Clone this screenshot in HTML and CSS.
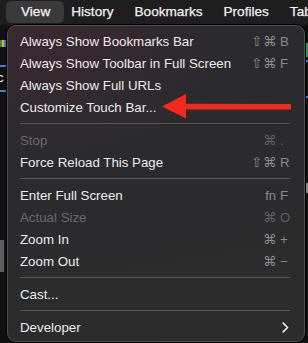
FILE: index.html
```html
<!DOCTYPE html>
<html>
<head>
<meta charset="utf-8">
<link rel="stylesheet" href="styles.css">
</head>
<body>
<div class="screen">
  <header class="menubar">
    <span class="mb-item active">View</span>
    <span class="mb-item">History</span>
    <span class="mb-item">Bookmarks</span>
    <span class="mb-item">Profiles</span>
    <span class="mb-item">Tab</span>
  </header>
  <div class="desk">
    <div class="edge edge-left">
      <div class="favicon"><i class="c1"></i><i class="c2"></i><i class="c3"></i></div>
      <div class="bl bl1"></div>
      <div class="ch">c</div>
      <div class="bl bl2"></div>
      <div class="gray-block"></div>
    </div>
    <div class="fill"></div>
    <div class="edge edge-right">
      <div class="green"></div>
      <div class="bl bl3"></div>
      <div class="bl bl4"></div>
      <div class="lg"></div>
    </div>

    <div class="menu">
      <div class="item"><span class="label">Always Show Bookmarks Bar</span><span class="sc"><span class="mods">⇧⌘</span><span class="key">B</span></span></div>
      <div class="item"><span class="label">Always Show Toolbar in Full Screen</span><span class="sc"><span class="mods">⇧⌘</span><span class="key">F</span></span></div>
      <div class="item"><span class="label">Always Show Full URLs</span></div>
      <div class="item"><span class="label">Customize Touch Bar...</span></div>
      <div class="sep"></div>
      <div class="item disabled"><span class="label">Stop</span><span class="sc"><span class="mods">⌘</span><span class="key">.</span></span></div>
      <div class="item"><span class="label">Force Reload This Page</span><span class="sc"><span class="mods">⇧⌘</span><span class="key">R</span></span></div>
      <div class="sep"></div>
      <div class="item"><span class="label">Enter Full Screen</span><span class="sc"><span class="mods fn">fn</span><span class="key">F</span></span></div>
      <div class="item disabled"><span class="label">Actual Size</span><span class="sc"><span class="mods">⌘</span><span class="key">O</span></span></div>
      <div class="item"><span class="label">Zoom In</span><span class="sc"><span class="mods">⌘</span><span class="key">+</span></span></div>
      <div class="item"><span class="label">Zoom Out</span><span class="sc"><span class="mods">⌘</span><span class="key">−</span></span></div>
      <div class="sep"></div>
      <div class="item"><span class="label">Cast...</span></div>
      <div class="sep"></div>
      <div class="item"><span class="label">Developer</span><svg class="chev" width="7" height="11" viewBox="0 0 7 11"><path d="M1.2 1.2 L5.6 5.5 L1.2 9.8" fill="none" stroke="#e6e6e6" stroke-width="1.7" stroke-linecap="round" stroke-linejoin="round"/></svg></div>

      <svg class="arrow" width="132" height="28" viewBox="0 0 132 28">
        <polygon points="0,13.5 24,1 24,10.8 129,11 129,16.5 24,16.5 24,25.5" fill="#f2291b"/>
      </svg>
    </div>
  </div>
</div>
</body>
</html>
```

FILE: styles.css
```css
* { box-sizing: border-box; }
html, body { margin: 0; padding: 0; }
body {
  width: 308px;
  height: 343px;
  overflow: hidden;
  background: #0e0e0e;
  font-family: "Liberation Sans", Arial, sans-serif;
}
.screen {
  width: 308px;
  height: 343px;
  display: flex;
  flex-direction: column;
  overflow: hidden;
}
.menubar {
  height: 25px;
  flex: none;
  background: #1e1e1e;
  display: flex;
  align-items: flex-start;
  padding: 1px 0 0 21px;
  gap: 21px;
  overflow: hidden;
}
.mb-item {
  color: #f2f2f2;
  font-size: 13.6px;
  height: 22px;
  line-height: 22px;
  border-radius: 5px;
  -webkit-text-stroke: 0.25px #f2f2f2;
  white-space: nowrap;
  flex: none;
}
.mb-item.active {
  background: #3a3a3a;
  padding: 0 14px 0 15px;
  margin: 0 -14px 0 -15px;
}
.desk {
  flex: 1;
  position: relative;
  display: flex;
}
.edge {
  display: flex;
  flex-direction: column;
  background: #111;
  overflow: hidden;
}
.edge-left { width: 7px; padding-top: 15px; }
.edge-right { width: 3px; padding-top: 18px; }
.fill { flex: 1; background: #151515; }
.favicon { display: flex; height: 7px; }
.favicon i { display: block; width: 2px; height: 7px; }
.c1 { background: #2f8f3f; }
.c2 { background: #e8b21d; }
.c3 { background: #3a78d8; }
.bl { height: 2px; background: #3d7fe0; }
.bl1 { margin-top: 18px; width: 6px; }
.ch { color: #eee; font-size: 13px; line-height: 14px; margin-top: 4px; margin-left: -3px; }
.bl2 { margin-top: 5px; width: 6px; }
.gray-block { margin-top: 148px; width: 4px; height: 32px; background: #5f5f5f; }
.green { height: 14px; background: #1d9a5a; }
.bl3 { margin-top: 3px; }
.bl4 { margin-top: 34px; }
.lg { margin-top: 85px; height: 10px; background: #8a8a8a; }

.menu {
  position: absolute;
  left: 7px;
  top: 0;
  width: 298px;
  height: 317px;
  border-radius: 9px;
  border: 1px solid #505050;
  box-shadow: 0 0 0 1px #000;
  background:
    radial-gradient(ellipse 180px 120px at 40px 10px, rgba(70, 40, 48, 0.55), rgba(70, 40, 48, 0) 100%),
    linear-gradient(170deg, #2a2a30 0%, #2b2b2e 35%, #2c2c2c 100%);
  padding: 4px 0 0 0;
  color: #ececec;
  font-size: 13.3px;
}
.item {
  height: 22px;
  display: flex;
  align-items: center;
  padding: 0 14px 0 12px;
  white-space: nowrap;
}
.label { flex: 1; }
.item.disabled .label { color: #6a6a6a; }
.sc {
  display: flex;
  align-items: center;
  color: #8b8b8b;
  font-family: "DejaVu Sans", sans-serif;
  font-size: 13.5px;
}
.item.disabled .sc { color: #606060; }
.mods { text-align: right; letter-spacing: 0.5px; }
.mods.fn { font-family: "Liberation Sans", Arial, sans-serif; font-size: 13px; margin-right: 1px; letter-spacing: 0; }
.key {
  width: 10px;
  margin-left: 3px;
  font-family: "Liberation Sans", Arial, sans-serif;
  font-size: 13.3px;
  text-align: left;
}
.chev { margin-right: 1px; }
.sep {
  height: 1px;
  margin: 5px 14px 5px 12px;
  background: #565656;
}
.arrow {
  position: absolute;
  left: 154px;
  top: 67px;
}
```
